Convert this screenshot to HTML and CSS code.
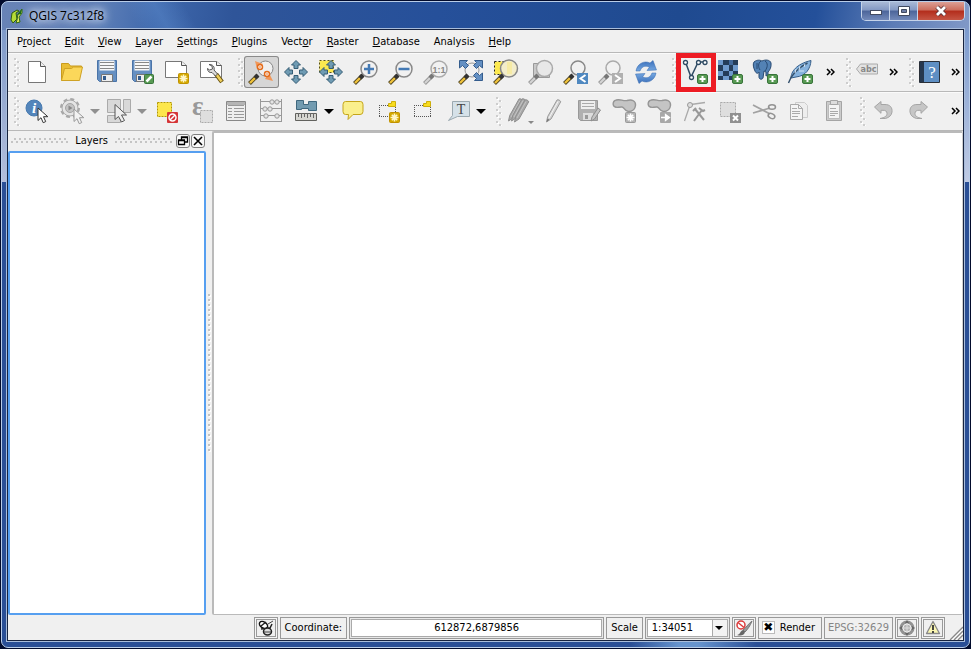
FILE: index.html
```html
<!DOCTYPE html>
<html lang="en">
<head>
<meta charset="utf-8">
<title>QGIS 7c312f8</title>
<link rel="stylesheet" href="styles.css">
</head>
<body>
<svg class="defs" aria-hidden="true">
  <defs>
    <linearGradient id="refresh" x1="0" y1="0" x2="0" y2="1"><stop offset="0" stop-color="#3a6fba"/><stop offset="1" stop-color="#77a9e2"/></linearGradient>
    <g id="plus"><rect x="19.5" y="18.5" width="10" height="9" rx="1.5" fill="#589a53" stroke="#38743a"/><path d="M24.5 20v6M21.500 23h6" stroke="#fff" stroke-width="2"/></g>
    <g id="star"><rect x="18.500" y="17.500" width="10" height="10" rx="1" fill="#d4a900" stroke="#c09200"/><path d="M23.500 18.500v8M19.500 22.500h8M20.800 19.800l5.400 5.400M26.200 19.800l-5.400 5.400" stroke="#fff6c8" stroke-width="1.600"/></g>
    <g id="gstar"><rect x="18.500" y="17.500" width="10" height="10" rx="1" fill="#b4b4b4" stroke="#999"/><path d="M23.500 18.500v8M19.500 22.500h8M20.800 19.800l5.400 5.400M26.200 19.800l-5.400 5.400" stroke="#fff" stroke-width="1.600"/></g>
    <g id="handle"><path d="M5.500 27.500l8-8" stroke="#4d4320" stroke-width="4"/><path d="M6 27l5-5" stroke="#f1c33b" stroke-width="2.400"/><path d="M11 22l3-3" stroke="#333" stroke-width="4"/></g>
    <g id="ghandle"><path d="M5.500 27.500l8-8" stroke="#999" stroke-width="4"/><path d="M6 27l5-5" stroke="#d4d4d4" stroke-width="2.200"/><path d="M11 22l3-3" stroke="#777" stroke-width="4"/></g>
    <g id="arrows" fill="#6f9bb3" stroke="#355d75" stroke-width="1"><path id="arm" d="M17 4.500l4.500 4.500h-2.500v3.500h-4v-3.500h-2.500z"/><use href="#arm" transform="rotate(90 17 16)"/><use href="#arm" transform="rotate(180 17 16)"/><use href="#arm" transform="rotate(270 17 16)"/></g>
    <g id="disk"><path d="M7.500 4.500h19v21h-17l-2-2z" fill="#6690c2" stroke="#4a74a8"/><path d="M9.500 4.500h15v10h-15z" fill="#f8f8f8"/><path d="M10 6.500h14M10 9.500h14M10 12.500h14" stroke="#888"/><path d="M11.500 18.500h11v7h-11z" fill="#eee" stroke="#777"/><path d="M13 20h3v4h-3z" fill="#345c8d"/></g>
    <g id="blob"><path d="M8 5.500c4-2.500 8 1 12 0 5-1.500 9 .5 8.500 5-.5 4-3 6-7 6-4.500-.2-3.500-4-6.500-4.500-3-.3-6 1.500-8-.7-1.500-2-1-4.800 1-5.800z" fill="#c4c4c4" stroke="#959595" stroke-width="1.400"/></g>
    <g id="pen"><path d="M9.500 27l1.200-5.500L20 5c1-.8 3.500.5 3.700 1.800L14 24z" fill="#d0d0d0" stroke="#9a9a9a"/><path d="M12 23L21 6.500" stroke="#f5f5f5"/><path d="M9.500 27l1-3.500 2 1.200z" fill="#777"/></g>
    <g id="penfill"><path d="M9.500 27l1.200-5.500L20 5c1-.8 3.500.5 3.700 1.800L14 24z" fill="#a8a8a8" stroke="#8e8e8e"/><path d="M12 23L21 6.500" stroke="#c4c4c4"/></g>
    <g id="frame"><path d="M8 10.500h17M8 21.500h17M8.500 10v12M24.500 10v12" fill="none" stroke="#555" stroke-dasharray="1 1"/></g>
    <g id="flag"><path d="M17.500 8.500h3V6.500h4v5h-7z" fill="#f8dc1e" stroke="#cdae0a"/></g>
    <path id="cursor" d="M0 0v12.500l3-2.800 2.200 5 2.500-1.100-2.200-4.900h4.300z"/>
    <path id="undo-shape" d="M8.500 12L15 6.500v3h4c5 0 7.500 3 7 7.500-.4 3.500-3 5.500-6.500 6.500H14c5-1 7-2.500 7-5 0-2.300-1.500-3.300-4-3.200h-2v3z" fill="#c6c6c6" stroke="#a5a5a5"/>
  </defs>
</svg>

<div class="window">
  <header class="titlebar">
    <svg class="app-icon" viewBox="0 0 14 16"><path d="M2 5l5-3 2 1-3 2 1 6-4 4-2-3z" fill="#b5dc36" stroke="#2f5c13"/><path d="M8 6l4-5v4l-3 4 1 5-4 1 1-3z" fill="#e7ef62" stroke="#2f6a12"/><path d="M7 7l5-6-1 5z" fill="#1b6a19"/></svg>
    <h1 class="title">QGIS 7c312f8</h1>
    <div class="controls">
      <button class="ctl" aria-label="Minimize"><svg viewBox="0 0 14 12"><rect x="1.500" y="5.500" width="11" height="4" fill="#fff" stroke="#414a60"/></svg></button>
      <button class="ctl" aria-label="Maximize"><svg viewBox="0 0 14 12"><path d="M1.500 1.500h11v9h-11z" fill="#fff" stroke="#414a60"/><path d="M4.500 4.500h5v3h-5z" fill="#6b7ca4" stroke="#414a60"/></svg></button>
      <button class="ctl close" aria-label="Close"><svg viewBox="0 0 14 12"><path d="M3 2l8 8M11 2l-8 8" stroke="#5a3035" stroke-width="4.500"/><path d="M3 2l8 8M11 2l-8 8" stroke="#fff" stroke-width="2.800"/></svg></button>
    </div>
  </header>

  <div class="client">
    <nav class="menubar">
      <button>P<u>r</u>oject</button><button><u>E</u>dit</button><button><u>V</u>iew</button><button><u>L</u>ayer</button><button><u>S</u>ettings</button><button><u>P</u>lugins</button><button>Vect<u>o</u>r</button><button><u>R</u>aster</button><button><u>D</u>atabase</button><button>Analysis</button><button><u>H</u>elp</button>
    </nav>

    <div class="toolbar">
      <div class="group"><span class="grip"></span>
        <button class="tool" aria-label="New"><svg viewBox="0 0 35 32"><path d="M8.500 5.500h12l5 5v16h-17z" fill="#fff" stroke="#777"/><path d="M20.500 5.500v5h5" fill="#eee" stroke="#555"/></svg></button>
        <button class="tool" aria-label="Open"><svg viewBox="0 0 35 32"><path d="M6.500 24.500v-17h7l2 2.500h11v4" fill="#e9bd33" stroke="#c99b1c"/><path d="M6.500 24.500l3-12h7l2-1.500h9l-3 13.500z" fill="#fbd75a" stroke="#cfa224"/></svg></button>
        <button class="tool" aria-label="Save"><svg viewBox="0 0 35 32"><use href="#disk"/></svg></button>
        <button class="tool" aria-label="Save as"><svg viewBox="0 0 35 32"><use href="#disk"/><rect x="19.500" y="18.500" width="9" height="9" rx="1" fill="#589a53" stroke="#38743a"/><path d="M21.500 25.500l5-5" stroke="#fff" stroke-width="2.500"/></svg></button>
        <button class="tool" aria-label="New composer"><svg viewBox="0 0 35 32"><path d="M5.500 5.500h16l5 4v12h-21z" fill="#fff" stroke="#777"/><path d="M21.500 5.500v4h5" fill="#eee" stroke="#555"/><use href="#star"/></svg></button>
        <button class="tool" aria-label="Composer manager"><svg viewBox="0 0 35 32"><path d="M5.500 5.500h16l5 4v12h-21z" fill="#fff" stroke="#777"/><path d="M21.500 5.500v4h5" fill="#eee" stroke="#555"/><path d="M21 18l6 8" stroke="#66510e" stroke-width="4.500"/><path d="M21.500 18.500l5 7" stroke="#efcf5a" stroke-width="2.500"/><path d="M14 8.500l3 1.500.5 3-3 1-2-1.500c0 3 2 4.500 4.500 4l3.500 3.500 2-2-3.500-4c1-3-1.500-6-5-5.500z" fill="#ddd" stroke="#555"/></svg></button>
      </div>
      <div class="group"><span class="grip"></span>
        <button class="tool active" aria-label="Touch zoom and pan"><svg viewBox="0 0 35 32"><circle cx="21.500" cy="12.500" r="7.500" fill="#efefef" stroke="#888"/><use href="#handle"/><path d="M11 5l8 3-6 5zM29 25l-8-2 4-6z" fill="#f0975a"/><circle cx="16" cy="11" r="2.500" fill="#fff" stroke="#e36c1c" stroke-width="1.500"/><circle cx="23" cy="18" r="2.500" fill="#fff" stroke="#e36c1c" stroke-width="1.500"/><circle cx="16" cy="11" r=".8" fill="#e36c1c"/><circle cx="23" cy="18" r=".8" fill="#e36c1c"/></svg></button>
        <button class="tool" aria-label="Pan map"><svg viewBox="0 0 35 32"><use href="#arrows"/></svg></button>
        <button class="tool" aria-label="Pan to selection"><svg viewBox="0 0 35 32"><path d="M5.500 4.500h14v12h-14z" fill="#fce94f" stroke="#55501c" stroke-dasharray="2 2"/><use href="#arrows"/></svg></button>
        <button class="tool" aria-label="Zoom in"><svg viewBox="0 0 35 32"><circle cx="20" cy="13" r="8" fill="#f1f1f1" stroke="#888" stroke-width="1.500"/><use href="#handle"/><path d="M20 8v10M15 13h10" stroke="#4379b4" stroke-width="2.500"/></svg></button>
        <button class="tool" aria-label="Zoom out"><svg viewBox="0 0 35 32"><circle cx="20" cy="13" r="8" fill="#f1f1f1" stroke="#888" stroke-width="1.500"/><use href="#handle"/><path d="M14.500 13h11" stroke="#4379b4" stroke-width="2.500"/></svg></button>
        <button class="tool" aria-label="Zoom to native resolution"><svg viewBox="0 0 35 32"><circle cx="20" cy="13" r="8" fill="#f1f1f1" stroke="#aaa" stroke-width="1.500"/><use href="#ghandle"/><text x="20" y="16.500" class="t-native">1:1</text></svg></button>
        <button class="tool" aria-label="Zoom full"><svg viewBox="0 0 35 32"><circle cx="18" cy="14" r="7" fill="#f1f1f1" stroke="#999"/><use href="#handle"/><g fill="#6490c3" stroke="#345c8d"><path d="M5.500 4.500h8l-2 2 3 3-3 3-3-3-3 2.500z"/><path d="M28.500 4.500h-8l2 2-3 3 3 3 3-3 3 2.500z"/><path d="M28.500 24.500h-8l2-2-3-3 3-3 3 3 3-2.500z"/></g></svg></button>
        <button class="tool" aria-label="Zoom to selection"><svg viewBox="0 0 35 32"><path d="M5.500 5.500h18v13h-18z" fill="#fce94f" stroke="#222" stroke-dasharray="2 2"/><circle cx="20" cy="12.500" r="8.500" fill="#f3edca" stroke="#888" stroke-width="1.500"/><path d="M18 6h5v12h-5z" fill="#f6eba5"/><use href="#handle"/></svg></button>
        <button class="tool" aria-label="Zoom to layer"><svg viewBox="0 0 35 32"><path d="M9.500 7.500h16v14h-16z" fill="#c9c9c9" stroke="#999"/><circle cx="20.500" cy="12.500" r="8" fill="#e8e8e8" stroke="#aaa" stroke-width="1.500"/><use href="#ghandle"/></svg></button>
        <button class="tool" aria-label="Zoom last"><svg viewBox="0 0 35 32"><circle cx="19" cy="12" r="7" fill="#f1f1f1" stroke="#888" stroke-width="1.500"/><use href="#handle"/><path d="M18 17h11v11H18z" fill="#4f88c0"/><path d="M26.500 19l-5 3.500 5 3.500" fill="none" stroke="#fff" stroke-width="2"/></svg></button>
        <button class="tool" aria-label="Zoom next"><svg viewBox="0 0 35 32"><circle cx="19" cy="12" r="7" fill="#f1f1f1" stroke="#aaa" stroke-width="1.500"/><use href="#ghandle"/><path d="M18 17h11v11H18z" fill="#b0b0b0"/><path d="M21 19l5 3.500-5 3.500" fill="none" stroke="#fff" stroke-width="2"/></svg></button>
        <button class="tool" aria-label="Refresh"><svg viewBox="0 0 35 32"><path id="ref" d="M7 15c1-7 8-11 14-8l3-2.500 3.500 9.500-9.500.5 2.500-3.500c-5-2-8 0-9.500 4z" fill="url(#refresh)" stroke="#3468ae" stroke-width=".5"/><use href="#ref" transform="rotate(180 17 16)"/></svg></button>
      </div>
      <div class="group"><span class="grip"></span>
        <button class="tool marked" aria-label="Add vector layer"><svg viewBox="0 0 35 32"><path d="M8 7.500l5 13.500 6.500-13.500M22 6h3" fill="none" stroke="#2e4a63" stroke-width="1.500"/><g fill="#fff" stroke="#2e4a63" stroke-width="1.300"><circle cx="7.500" cy="6.500" r="2"/><circle cx="13.500" cy="21.500" r="2"/><circle cx="20.500" cy="6.500" r="2"/><circle cx="27" cy="6.500" r="2"/></g><use href="#plus"/></svg></button>
        <button class="tool" aria-label="Add raster layer"><svg viewBox="0 0 35 32"><path d="M5 4h20v20H5z" fill="#6f9acd"/><path d="M10 4h6v5h-6zM20 4h5v5h-5zM5 9h5v6H5zM16 9h4v6h-4zM10 15h6v5h-6zM20 15h5v5h-5zM5 20h5v4H5zM16 20h4v4h-4z" fill="#243c59"/><path d="M16 4h4v5h-4z" fill="#41699c"/><use href="#plus"/></svg></button>
        <button class="tool" aria-label="Add PostGIS layer"><svg viewBox="0 0 35 32"><path d="M6 6c3-2.500 6-2 8-1 3-1.500 8-1.500 9 2 .5 4-1 7-3 9v3l-2 1v-4l-2-1-1 7c-1 2-4 1.500-4-1v-5c-1 2-3 1.500-4-1C5.500 12 4.500 8 6 6z" fill="#5382b5" stroke="#294b73"/><path d="M13 5c-3 2-3 6-1 9M17 5c3 2 3 6 0 10M9 7v6" fill="none" stroke="#294b73"/><use href="#plus"/></svg></button>
        <button class="tool" aria-label="Add SpatiaLite layer"><svg viewBox="0 0 35 32"><path d="M8 22c0-6 5-14 20-17.500-.5 8-5 15.500-15 16.500z" fill="#86b2dd" stroke="#355d88"/><path d="M5.500 27c2-7 9-15 19-20" fill="none" stroke="#34506c" stroke-width="1.400"/><path d="M13 13l-1 4M17 10l-1 4M22 8l-1 3M16 15h5" stroke="#d5e6f5"/><use href="#plus"/></svg></button>
        <button class="more" aria-label="More layer tools"><svg viewBox="0 0 9 8"><path d="M1 1l3 3-3 3M5 1l3 3-3 3"/></svg></button>
      </div>
      <div class="group"><span class="grip"></span>
        <button class="tool narrow" aria-label="Labels"><svg viewBox="2 0 29 32"><path d="M6.500 13l4-5h17v10h-17z" fill="#e3e3e3" stroke="#aaa"/><text x="18.500" y="16" class="t-abc">abc</text></svg></button>
        <button class="more" aria-label="More label tools"><svg viewBox="0 0 9 8"><path d="M1 1l3 3-3 3M5 1l3 3-3 3"/></svg></button>
      </div>
      <div class="group"><span class="grip"></span>
        <button class="tool narrow" aria-label="Help"><svg viewBox="0 0 29 32"><path d="M4.500 5.500h20v21h-20z" fill="#5e8fc4" stroke="#292f38"/><path d="M5 6h4v20H5z" fill="#26384f"/><text x="17" y="22" class="t-help">?</text></svg></button>
      </div>
      <button class="more last" aria-label="More help tools"><svg viewBox="0 0 9 8"><path d="M1 1l3 3-3 3M5 1l3 3-3 3"/></svg></button>
    </div>

    <div class="toolbar">
      <div class="group"><span class="grip"></span>
        <button class="tool" aria-label="Identify features"><svg viewBox="0 0 35 32"><circle cx="14" cy="13" r="8" fill="#5385bb" stroke="#477aaf"/><text x="14" y="18" class="t-info">i</text><use href="#cursor" x="18" y="13" fill="#fff" stroke="#333"/></svg></button>
        <button class="tool" aria-label="Run feature action"><svg viewBox="0 0 35 32"><circle cx="15" cy="13" r="9" fill="none" stroke="#a8a8a8" stroke-width="2" stroke-dasharray="4 3.070"/><circle cx="15" cy="13" r="8" fill="#e5e5e5" stroke="#a8a8a8"/><circle cx="15" cy="13" r="4.500" fill="#c4c4c4" stroke="#a5a5a5"/><path d="M13.500 10.500l4 2.500-4 2.500z" fill="#888"/><use href="#cursor" x="19" y="14" fill="#f2f2f2" stroke="#999"/></svg></button>
        <button class="drop off" aria-label="Action menu"></button>
        <button class="tool" aria-label="Select features"><svg viewBox="0 0 35 32"><path d="M5.500 4.500h13v13h-13zM21.500 4.500h7v13h-7zM5.500 20.500h13v7h-13z" fill="#d8d8d8" stroke="#aaa"/><path d="M13 9.500v15l3.500-3 3 5.500 3-1.500-3-5.500h5z" fill="#eee" stroke="#555"/></svg></button>
        <button class="drop off" aria-label="Selection menu"></button>
        <button class="tool" aria-label="Deselect features"><svg viewBox="0 0 35 32"><path d="M8.500 7.500h14v14h-14z" fill="#fde74c" stroke="#b39800" stroke-dasharray="2 1"/><rect x="18" y="17" width="11" height="11" rx="1" fill="#d53436"/><circle cx="23.500" cy="22.500" r="3.500" fill="none" stroke="#fff" stroke-width="1.500"/><path d="M21 25l5-5" stroke="#fff" stroke-width="1.500"/></svg></button>
        <button class="tool" aria-label="Select by expression"><svg viewBox="0 0 35 32"><text x="8" y="20" class="t-eps">ε</text><path d="M16.500 15.500h12v12h-12z" fill="#dedede" stroke="#aaa" stroke-dasharray="2 1"/></svg></button>
        <button class="tool" aria-label="Open attribute table"><svg viewBox="0 0 35 32"><path d="M7.500 6.500h19v19h-19z" fill="#eee" stroke="#888"/><path d="M8 7h18v3H8z" fill="#b5b5b5"/><path d="M9 13.500h4M15 13.500h10M9 16.500h4M15 16.500h10M9 19.500h4M15 19.500h10M9 22.500h4M15 22.500h10M9 10.500h16" stroke="#999"/></svg></button>
        <button class="tool" aria-label="Field calculator"><svg viewBox="0 0 35 32"><path d="M6.500 4v23M27.500 4v23M6 6.500h22M6 13.500h22M6 20.500h22M6 26.500h22" stroke="#999" fill="none"/><g fill="#e5e5e5" stroke="#999"><circle cx="18" cy="7" r="2.200"/><circle cx="23" cy="7" r="2.200"/><circle cx="11" cy="14" r="2.200"/><circle cx="16" cy="14" r="2.200"/><circle cx="12" cy="21" r="2.200"/><circle cx="23" cy="21" r="2.200"/></g></svg></button>
        <button class="tool" aria-label="Measure"><svg viewBox="0 0 35 32"><path d="M7.500 5.500h7v4h5v-3h8v9h-8v-2h-7v1h-5z" fill="#729bb0" stroke="#40687e"/><path d="M6.500 18.500h21v7h-21z" fill="#d6d6d1" stroke="#62625e"/><path d="M9.500 18v4M12.500 18v5M15.500 18v4M18.500 18v5M21.500 18v4M24.500 18v5" stroke="#666"/></svg></button>
        <button class="drop" aria-label="Measure menu"></button>
        <button class="tool" aria-label="Map tips"><svg viewBox="0 0 35 32"><path d="M9.500 6.500h15q2.500 0 2.500 3v7q0 3-3 3h-7l-5 5 .5-5h-3q-2.500 0-2.500-3v-7q0-3 2.500-3z" fill="#faef8c" stroke="#c5a51a"/></svg></button>
        <button class="tool" aria-label="New bookmark"><svg viewBox="0 0 35 32"><use href="#frame"/><use href="#flag"/><use href="#star"/></svg></button>
        <button class="tool" aria-label="Show bookmarks"><svg viewBox="0 0 35 32"><use href="#frame"/><use href="#flag"/></svg></button>
        <button class="tool" aria-label="Text annotation"><svg viewBox="0 0 35 32"><path d="M11.500 6.500h17v15h-12l-9 4 4-5z" fill="#d5e1e8" stroke="#9ba9b0"/><text x="20" y="19" class="t-text">T</text></svg></button>
        <button class="drop" aria-label="Annotation menu"></button>
      </div>
      <div class="group"><span class="grip"></span>
        <button class="tool" aria-label="Current edits"><svg viewBox="0 0 35 32"><use href="#penfill" x="-3" y="-1"/><use href="#penfill" x="0" y="-1"/><use href="#penfill" x="3"/><path d="M26 26h6l-3 3z" fill="#888"/></svg></button>
        <button class="tool" aria-label="Toggle editing"><svg viewBox="0 0 35 32"><use href="#pen"/></svg></button>
        <button class="tool" aria-label="Save edits"><svg viewBox="0 0 35 32"><path d="M6.500 5.500h19v20h-17l-2-2z" fill="#b0b0b0" stroke="#999"/><path d="M9 6h14v8H9z" fill="#eee"/><path d="M10 8.500h12M10 11.500h12" stroke="#aaa"/><path d="M11 18h10v7H11z" fill="#ddd"/><path d="M13 20h3v4h-3z" fill="#999"/><path d="M19 26l1-4 6-9 2.500 2-6 9z" fill="#c4c4c4" stroke="#8e8e8e"/></svg></button>
        <button class="tool" aria-label="Add feature"><svg viewBox="0 0 35 32"><use href="#blob"/><use href="#gstar"/></svg></button>
        <button class="tool" aria-label="Move feature"><svg viewBox="0 0 35 32"><use href="#blob"/><rect x="18" y="17" width="11" height="11" rx="1" fill="#a8a8a8"/><path d="M19 22.500h6M23.500 19.500l4 3-4 3z" fill="#fff" stroke="#fff" stroke-width="1.300"/></svg></button>
        <button class="tool" aria-label="Node tool"><svg viewBox="0 0 35 32"><path d="M7.500 26l5-14.500M14 9.500l14-2" stroke="#aaa" stroke-width="1.300"/><circle cx="13" cy="10" r="2.500" fill="#ddd" stroke="#999"/><path d="M17 26l8-11M18 14l9 11" stroke="#999" stroke-width="2"/><path d="M22 13l4 3 2-1M16 16l3-3" fill="none" stroke="#999" stroke-width="2"/></svg></button>
        <button class="tool" aria-label="Delete selected"><svg viewBox="0 0 35 32"><path d="M8.500 7.500h15v14h-15z" fill="#dedede" stroke="#aaa" stroke-dasharray="2 1"/><path d="M18 18h11v10H18z" fill="#909090"/><path d="M21 20.500l5 5M26 20.500l-5 5" stroke="#fff" stroke-width="2"/></svg></button>
        <button class="tool" aria-label="Cut features"><svg viewBox="0 0 35 32"><path d="M6 10l17 9M6 18l17-5" stroke="#a2a2a2" stroke-width="1.800"/><ellipse cx="25" cy="12" rx="3.500" ry="2.300" fill="none" stroke="#929292" stroke-width="1.500"/><ellipse cx="24.500" cy="21" rx="3.500" ry="2.300" transform="rotate(25 24.500 21)" fill="none" stroke="#929292" stroke-width="1.500"/></svg></button>
        <button class="tool" aria-label="Copy features"><svg viewBox="0 0 35 32"><path d="M13.500 7.500h9l3 3v12h-12z" fill="#eee" stroke="#ccc"/><path d="M8.500 9.500h8l4 4v11h-12z" fill="#f4f4f4" stroke="#aaa"/><path d="M10 13.500h5M10 16.500h8M10 18.500h8M10 21.500h6M16.500 9.500v4h4" stroke="#aaa" fill="none"/></svg></button>
        <button class="tool" aria-label="Paste features"><svg viewBox="0 0 35 32"><path d="M9.500 6.500h15v19h-15z" fill="#ccc" stroke="#a5a5a5"/><path d="M11.500 9.500h11v14h-11z" fill="#f4f4f4" stroke="#bbb"/><path d="M13.500 5.500h7v4h-7z" fill="#ddd" stroke="#a5a5a5"/><path d="M13 13.500h6M13 16.500h8M13 18.500h8M13 20.500h5" stroke="#aaa"/></svg></button>
      </div>
      <div class="group"><span class="grip"></span>
        <button class="tool" aria-label="Undo"><svg viewBox="0 0 35 32"><use href="#undo-shape"/></svg></button>
        <button class="tool" aria-label="Redo"><svg viewBox="0 0 35 32"><use href="#undo-shape" transform="matrix(-1 0 0 1 35 0)"/></svg></button>
      </div>
      <button class="more last" aria-label="More edit tools"><svg viewBox="0 0 9 8"><path d="M1 1l3 3-3 3M5 1l3 3-3 3"/></svg></button>
    </div>

    <main class="workspace">
      <section class="dock">
        <div class="dock-title">
          <span class="dots"></span><h2>Layers</h2><span class="dots"></span>
          <button aria-label="Float"><svg viewBox="0 0 12 12"><path d="M4.500 5V2h6v5H8M4 2.500h7M1.500 5.500h6v4h-6zM1 5h7" fill="none" stroke="#000" stroke-width="1.300"/></svg></button>
          <button aria-label="Close panel"><svg viewBox="0 0 12 12"><path d="M2 2l8 8M10 2l-8 8" stroke="#000" stroke-width="1.600"/></svg></button>
        </div>
        <div class="layer-list"></div>
      </section>
      <div class="splitter"><span></span></div>
      <section class="canvas"></section>
    </main>

    <footer class="status">
      <button class="cell icon" aria-label="Toggle extents"><svg viewBox="0 0 20 18"><ellipse cx="7.500" cy="6" rx="4.500" ry="3" transform="rotate(35 7.500 6)" fill="#fff" stroke="#111" stroke-width="1.500"/><path d="M5 7l5-4M5 10l9-1 2-4M10 9l4 5" fill="none" stroke="#222" stroke-width="1.500"/><ellipse cx="11.500" cy="12.500" rx="4" ry="3.500" fill="#ddd" stroke="#222" stroke-width="1.500"/><path d="M8 13h7M12 5l5-3" stroke="#444"/></svg></button>
      <label class="cell" for="coord">Coordinate:</label>
      <input class="coord" id="coord" value="612872,6879856">
      <label class="cell" for="scale">Scale</label>
      <span class="combo"><select id="scale"><option>1:34051</option></select></span>
      <button class="cell icon" aria-label="Stop rendering"><svg viewBox="0 0 20 18"><path d="M18 2c-2 5-4 8-7 11l-2-2c3-2 5-6 9-9z" fill="#999" stroke="#777"/><path d="M9 11l2 2c-1 4-5 4-8 3 3 0 3-4 6-5z" fill="#666"/><circle cx="7" cy="6" r="4" fill="#fff" stroke="#db3b3b" stroke-width="1.500"/><path d="M4 3.500l6 5" stroke="#db3b3b" stroke-width="1.500"/></svg></button>
      <label class="cell check"><input type="checkbox" checked>Render</label>
      <span class="cell epsg">EPSG:32629</span>
      <button class="cell icon" aria-label="Projection"><svg viewBox="0 0 20 18"><circle cx="10" cy="9" r="7.500" fill="#929292"/><circle cx="10" cy="9" r="4" fill="#b5b5b5" stroke="#eee"/><path d="M10 1v16M2 9h16" stroke="#ddd"/><path d="M10 1l2 3H8zM10 17l2-3H8zM2 9l3-2v4zM18 9l-3-2v4z" fill="#666"/></svg></button>
      <button class="cell icon" aria-label="Messages"><svg viewBox="0 0 20 18"><path d="M10 2.500l6.500 12h-13z" fill="#fbf7b2" stroke="#888" stroke-width="1.300" stroke-linejoin="round"/><path d="M10 6v5M10 12v2" stroke="#333" stroke-width="1.800"/></svg></button>
      <svg class="resize" viewBox="0 0 16 16"><path d="M3 16L16 3M7 16l9-9M11 16l5-5" stroke="#888" stroke-width="1.300"/><path d="M4 17L17 4M8 17l9-9" stroke="#fff"/></svg>
    </footer>
  </div>
</div>
</body>
</html>
```
FILE: styles.css
```css
*, ::before, ::after { box-sizing: border-box; }

body {
  height: 100vh;
  margin: 0;
  padding: 1px;
  background: #020b2c;
  font: 11px/14px "DejaVu Sans Condensed", "DejaVu Sans", sans-serif;
  color: #000;
}

button, input, select { font: inherit; color: inherit; }
button { margin: 0; padding: 0; border: 0; background: none; }
svg { display: block; }
.defs { position: absolute; width: 0; height: 0; }

/* Window frame */
.window {
  display: flex;
  flex-direction: column;
  height: 100%;
  padding: 0 4px 5px;
  border: 1px solid #b9cde8;
  border-radius: 7px;
  background:
    linear-gradient(#7f9ac9, #b3bedb) left 28px / 5px 152px no-repeat,
    linear-gradient(#7c9bce, #c0cbe4) right 28px / 5px 152px no-repeat,
    linear-gradient(90deg, transparent 65%, #6794ce 70%, #6794ce 72%, transparent 78%) bottom / 100% 6px no-repeat,
    linear-gradient(60deg, transparent 14%, #5f8fd066 17%, transparent 20%) top / 100% 28px no-repeat,
    linear-gradient(100deg, #6883b6 0, #5f80b8 10%, #3f68ac 16%, #2f5599 24%, #26509a 45%, #1f4a90 70%, #24509a 84%, #5c7cb6 92%, #8199c7 100%) top / 100% 28px no-repeat,
    #2a4f96;
}

.titlebar {
  display: flex;
  align-items: center;
  height: 27px;
  padding-left: 4px;
}
.app-icon { width: 14px; height: 16px; }
.title {
  margin: 0 auto 0 5px;
  font: 12px/16px "Open Sans", "Noto Sans", sans-serif;
  text-shadow: 0 0 6px #dce6f5, 0 0 10px #dce6f5, 0 0 12px #dce6f5;
}
.controls {
  display: flex;
  align-self: flex-start;
  border: 1px solid #c5d3e9;
  border-top: 0;
  border-radius: 0 0 5px 5px;
  overflow: hidden;
}
.ctl {
  display: grid;
  place-items: center;
  width: 28px;
  height: 18px;
  border-right: 1px solid #c5d3e9;
  background: linear-gradient(#a9b9d7, #8398c3 45%, #4c659a 50%, #7289b9);
}
.ctl svg { width: 14px; height: 12px; }
.close {
  width: 46px;
  border: 0;
  background: linear-gradient(#dca095, #cb6c5c 45%, #b32d1c 50%, #c55544);
}

.client {
  display: flex;
  flex: 1;
  flex-direction: column;
  min-height: 0;
  border: 1px solid #17233f;
  outline: 1px solid #a9bddb;
  margin: 0 1px 1px;
  background: #f0f0f0;
}

/* Menu */
.menubar {
  display: flex;
  height: 23px;
  padding: 2px 0 0 2px;
  border-bottom: 1px solid #b8b8b8;
}
.menubar button { padding: 0 7px; }
u { text-underline-offset: 1px; }

/* Toolbars */
.toolbar {
  display: flex;
  gap: 2px;
  align-items: center;
  height: 39px;
  padding-bottom: 1px;
  border-top: 1px solid #fafafa;
  border-bottom: 1px solid #b8b8b8;
}
.group { display: flex; align-items: center; }
.grip {
  width: 12px;
  height: 30px;
  background:
    linear-gradient(#c8c8c8, #c8c8c8) 6px 1px / 12px 6px,
    linear-gradient(#c8c8c8, #c8c8c8) 9px 4px / 12px 6px;
  background:
    conic-gradient(from 270deg at 8px 2px, #cbcbcb 25%, transparent 0) 0 0 / 12px 6px;
  background:
    radial-gradient(circle at 7px 2px, #cdcdcd 1px, transparent 1px) 0 0 / 12px 6px,
    radial-gradient(circle at 8px 3px, #fff 1px, transparent 1px) 0 0 / 12px 6px,
    radial-gradient(circle at 10px 5px, #cdcdcd 1px, transparent 1px) 0 0 / 12px 6px,
    radial-gradient(circle at 11px 6px, #fff 1px, transparent 1px) 0 0 / 12px 6px;
}
.tool { position: relative; width: 35px; height: 32px; }
.tool svg { width: 35px; height: 32px; fill: none; overflow: visible; }
.tool.narrow, .narrow svg { width: 29px; }
.active {
  border-radius: 3px;
  background: #d6d6d6;
  box-shadow: inset 0 0 0 1px #8a8a8a;
}
.marked::after {
  content: "";
  position: absolute;
  inset: -3px -3px -4px -2px;
  border: 5px solid #ed1c24;
}
.drop {
  width: 12px;
  height: 32px;
}
.drop::before {
  content: "";
  display: block;
  width: 10px;
  border: 5px solid transparent;
  border-top-color: #000;
  border-bottom: 0;
}
.off::before { border-top-color: #909090; }
.more {
  width: 20px;
  height: 32px;
  padding-left: 8px;
}
.more svg {
  width: 9px;
  height: 8px;
  fill: none;
  stroke: #000;
  stroke-width: 1.5;
}
.last { width: 16px; margin-left: auto; padding-left: 4px; }

.tool text { text-anchor: middle; }
.tool .t-native { font: bold 9px "Liberation Sans", sans-serif; fill: #888; }
.tool .t-abc { font: bold 9px "DejaVu Sans Condensed", sans-serif; fill: #888; }
.tool .t-help { font: 17px "Liberation Serif", serif; fill: #fff; }
.tool .t-info { font: italic bold 15px "Liberation Serif", serif; fill: #fff; }
.tool .t-eps { font: bold 27px "Liberation Serif", serif; fill: #999; text-anchor: start; }
.tool .t-text { font: 14px "Liberation Serif", serif; fill: #444; }

/* Work area */
.workspace { display: flex; flex: 1; min-height: 0; }
.dock { display: flex; flex-direction: column; width: 198px; }
.dock-title {
  display: flex;
  gap: 1px;
  align-items: center;
  height: 20px;
  padding: 0 1px 1px 3px;
}
.dock-title h2 { margin: 0 6px; font: inherit; }
.dots {
  flex: 1;
  height: 6px;
  background:
    radial-gradient(circle at 4px 1px, #c4c4c4 1px, transparent 1px) 0 0 / 5px 6px,
    radial-gradient(circle at 1px 4px, #c4c4c4 1px, transparent 1px) 0 0 / 5px 6px;
}
.dock-title button {
  width: 14px;
  height: 14px;
  border: 1px solid #808080;
  border-radius: 3px;
  background: #f8f8f8;
}
.dock-title .dots + button { margin-left: 3px; }
.dock-title button svg { width: 12px; height: 12px; }
.layer-list {
  flex: 1;
  border: 2px solid #569ff0;
  border-radius: 2px;
  background: #fff;
}
.splitter { display: grid; place-items: center; width: 6px; }
.splitter span {
  width: 4px;
  height: 160px;
  background:
    radial-gradient(circle at 2px 2px, #c4c4c4 1px, transparent 1px) 0 0 / 4px 5px,
    radial-gradient(circle at 3px 3px, #fff 1px, transparent 1px) 0 0 / 4px 5px;
}
.canvas {
  flex: 1;
  border: 2px solid #bababa;
  border-right: 1px solid #d0d0d0;
  border-bottom-width: 1px;
  border-radius: 2px;
  background: #fff;
}

/* Status bar */
.status {
  display: flex;
  flex: none;
  gap: 2px;
  align-items: center;
  justify-content: flex-end;
  height: 25px;
}
.cell {
  display: flex;
  align-items: center;
  height: 22px;
  padding: 0 4px;
  border: 1px solid #999;
  background: #f0f0f0;
  white-space: nowrap;
}
.icon {
  width: 24px;
  padding: 0 1px;
  box-shadow: inset 0 0 0 1px #f5f5f5, inset 0 0 0 2px #999;
}
.icon svg { width: 20px; height: 18px; }
.coord {
  width: 255px;
  height: 22px;
  border: 1px solid #999;
  box-shadow: inset 0 0 0 1px #e8e8e8, inset 0 0 0 2px #aaa;
  background: #fff;
  text-align: center;
}
.combo {
  display: grid;
  grid-template-columns: 1fr 16px;
  align-items: center;
  width: 85px;
  height: 22px;
  border: 1px solid #999;
  box-shadow: inset 0 0 0 1px #e8e8e8, inset 0 0 0 2px #aaa;
  background: linear-gradient(90deg, #fff 66px, #aaa 66px, #aaa 67px, #f3f3f3 67px);
}
.combo::after {
  content: "";
  grid-area: 1 / 2;
  width: 8px;
  border: 4px solid transparent;
  border-top-color: #000;
  border-bottom: 0;
  margin-left: 2px;
}
.combo select {
  grid-area: 1 / 1 / 2 / 3;
  height: 20px;
  padding: 0 6px;
  border: 0;
  background: none;
  appearance: none;
}
.check { gap: 5px; padding: 0 6px 0 3px; }
.check input {
  display: grid;
  place-items: center;
  width: 13px;
  height: 13px;
  margin: 0;
  border: 1px solid #bbb;
  background: #fff;
  appearance: none;
}
.check input::before {
  content: "✖";
  height: 13px;
  font: 12px/11px "DejaVu Sans", sans-serif;
}
.epsg { padding: 0 3px; color: #858585; }
.resize {
  align-self: flex-end;
  width: 16px;
  height: 16px;
}
```
